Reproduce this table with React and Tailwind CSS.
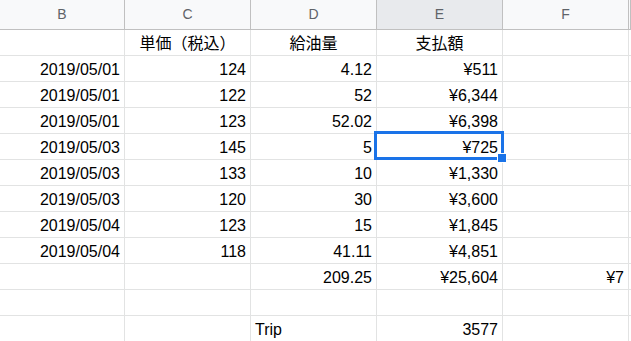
const cols = ['B', 'C', 'D', 'E', 'F', 'G']
const widths = ['w-[125px]', 'w-[126px]', 'w-[126px]', 'w-[126px]', 'w-[126px]', 'flex-1']

// each row: [B, C, D, E, F], align per cell
const rows = [
  [['', 'r'], ['単価（税込）', 'c'], ['給油量', 'c'], ['支払額', 'c'], ['', 'r']],
  [['2019/05/01', 'r'], ['124', 'r'], ['4.12', 'r'], ['¥511', 'r'], ['', 'r']],
  [['2019/05/01', 'r'], ['122', 'r'], ['52', 'r'], ['¥6,344', 'r'], ['', 'r']],
  [['2019/05/01', 'r'], ['123', 'r'], ['52.02', 'r'], ['¥6,398', 'r'], ['', 'r']],
  [['2019/05/03', 'r'], ['145', 'r'], ['5', 'r'], ['¥725', 'r'], ['', 'r']],
  [['2019/05/03', 'r'], ['133', 'r'], ['10', 'r'], ['¥1,330', 'r'], ['', 'r']],
  [['2019/05/03', 'r'], ['120', 'r'], ['30', 'r'], ['¥3,600', 'r'], ['', 'r']],
  [['2019/05/04', 'r'], ['123', 'r'], ['15', 'r'], ['¥1,845', 'r'], ['', 'r']],
  [['2019/05/04', 'r'], ['118', 'r'], ['41.11', 'r'], ['¥4,851', 'r'], ['', 'r']],
  [['', 'r'], ['', 'r'], ['209.25', 'r'], ['¥25,604', 'r'], ['¥7', 'r']],
  [['', 'r'], ['', 'r'], ['', 'r'], ['', 'r'], ['', 'r']],
  [['', 'r'], ['', 'r'], ['Trip', 'l'], ['3577', 'r'], ['', 'r']],
]

const alignClass = {
  r: 'justify-end pr-[4px]',
  c: 'justify-center',
  l: 'justify-start pl-[4px]',
}

export default function App() {
  return (
    <div className="relative w-[631px] h-[341px] overflow-hidden bg-white font-['Liberation_Sans','Noto_Sans_CJK_JP',sans-serif] text-black">
      {/* column letters */}
      <div className="flex h-[30px] border-b border-[#c0c0c0] bg-[#f8f9fa]">
        {cols.map((c, i) => (
          <div
            key={c}
            className={`${widths[i]} shrink-0 flex items-center justify-center border-r border-[#c0c0c0] text-[14px] text-[#5f6368] ${
              c === 'E' ? 'bg-[#e8eaed]' : ''
            }`}
          >
            {c === 'G' ? '' : c}
          </div>
        ))}
      </div>

      {rows.map((row, ri) => (
        <div key={ri} className="flex h-[26px] border-b border-[#e2e3e3]">
          {row.map(([text, a], ci) => (
            <div
              key={ci}
              className={`${widths[ci]} shrink-0 flex items-end pb-[2px] border-r border-[#e2e3e3] text-[16px] leading-[18px] whitespace-nowrap overflow-hidden ${alignClass[a]}`}
            >
              {text}
            </div>
          ))}
          <div className="flex-1" />
        </div>
      ))}

      {/* active cell E5 */}
      <div className="absolute left-[374px] top-[131px] w-[130px] h-[29px] border-[3px] border-[#1a73e8]" />
      <div className="absolute left-[497px] top-[153px] w-[10px] h-[10px] bg-[#1a73e8] border border-white" />
    </div>
  )
}
